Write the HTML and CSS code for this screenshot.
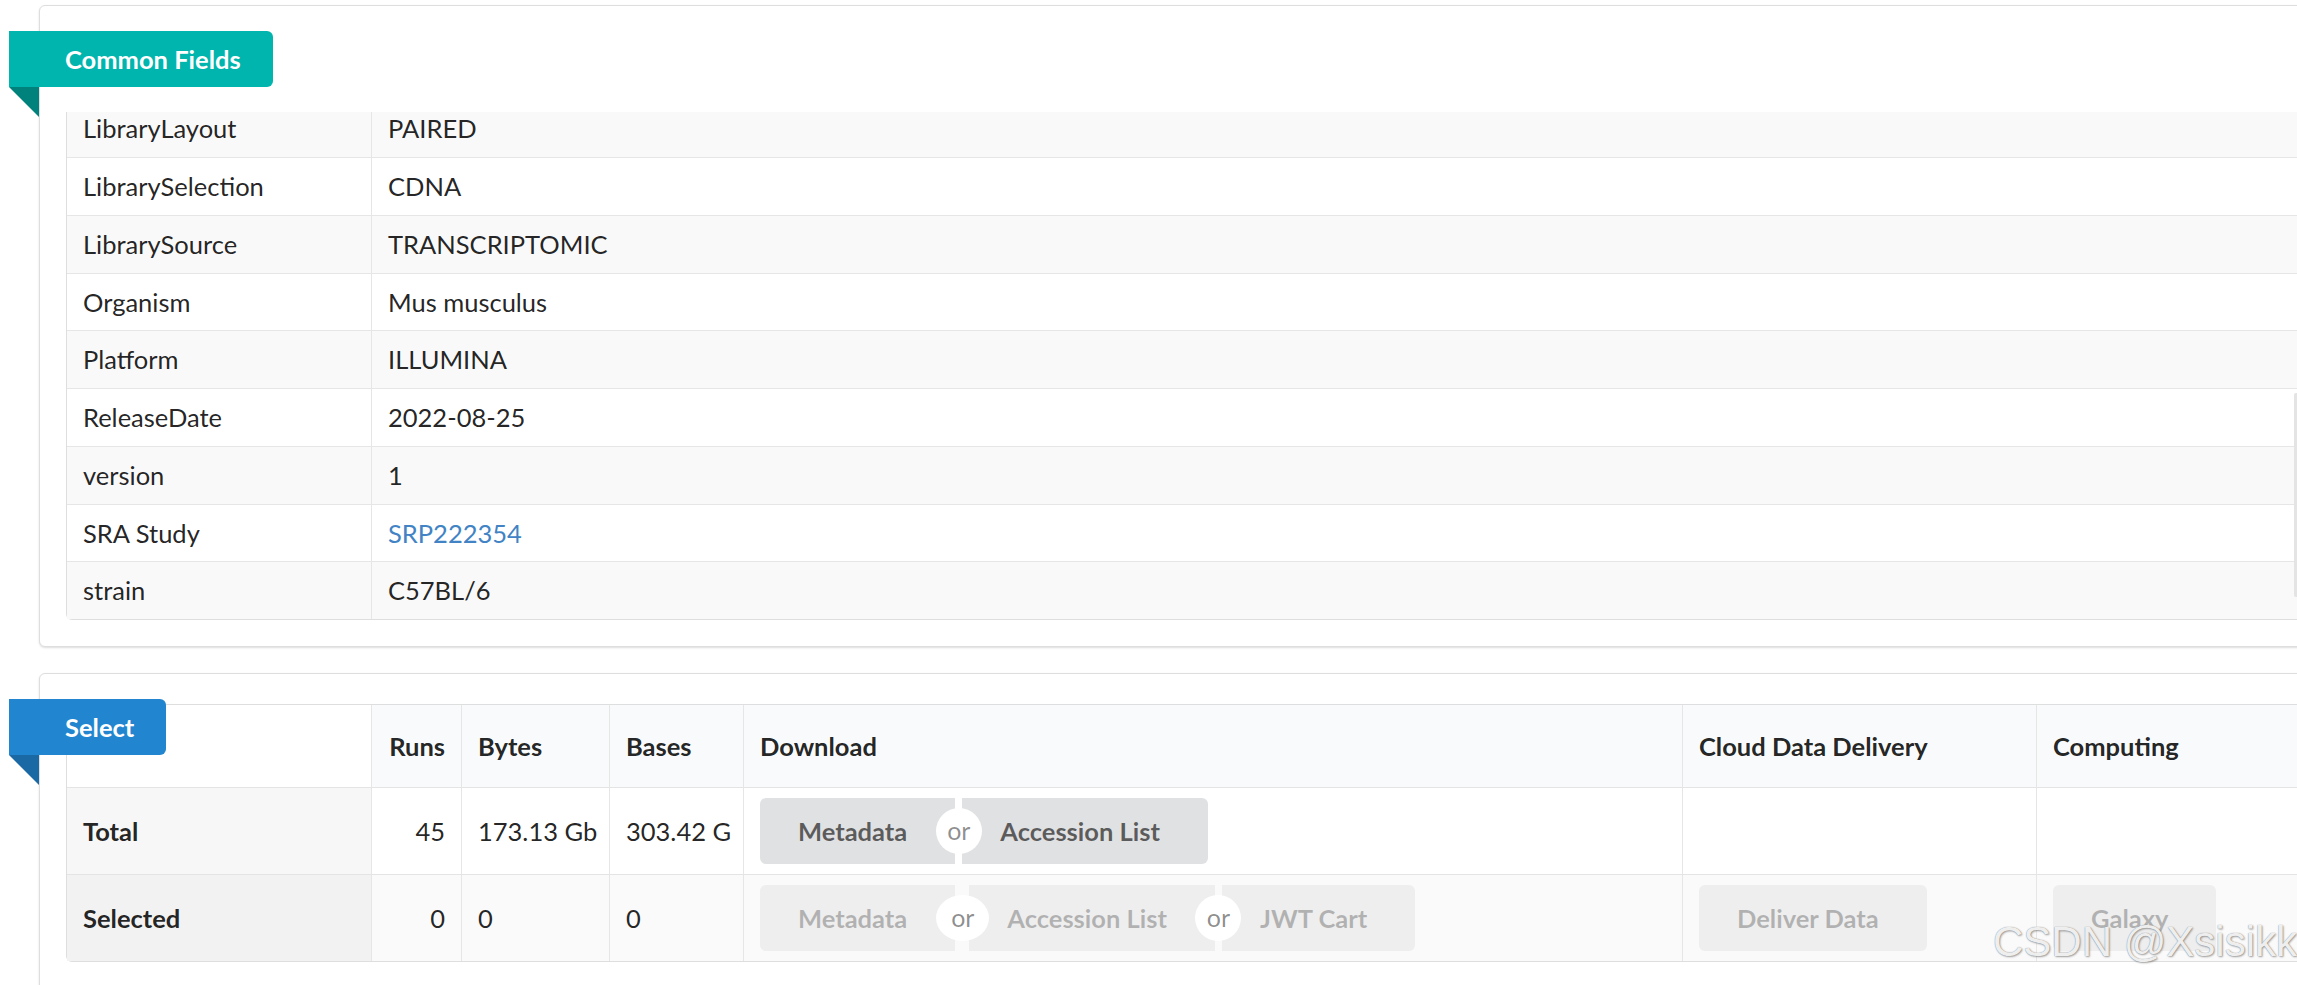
FILE: index.html
```html
<!DOCTYPE html>
<html lang="en">
<head>
  <meta charset="UTF-8" />
  <meta name="viewport" content="width=device-width, initial-scale=1.0" />
  <title>Run Selector</title>
  <link rel="stylesheet" href="styles.css">
</head>
<body>
  <div class="page">
    <div class="segment">
      <div class="ribbon teal">Common Fields</div>
      <div class="scroll-box">
        <table class="fields">
          <tr><td>LibraryLayout</td><td>PAIRED</td></tr>
          <tr><td>LibrarySelection</td><td>CDNA</td></tr>
          <tr><td>LibrarySource</td><td>TRANSCRIPTOMIC</td></tr>
          <tr><td>Organism</td><td>Mus musculus</td></tr>
          <tr><td>Platform</td><td>ILLUMINA</td></tr>
          <tr><td>ReleaseDate</td><td>2022-08-25</td></tr>
          <tr><td>version</td><td>1</td></tr>
          <tr><td>SRA Study</td><td><a href="#">SRP222354</a></td></tr>
          <tr><td>strain</td><td>C57BL/6</td></tr>
        </table>
        <div class="scroll-thumb"></div>
      </div>
    </div>

    <div class="segment select-segment">
      <div class="ribbon blue floating">Select</div>
      <table class="selector">
        <thead>
          <tr>
            <th class="c-label"></th>
            <th class="c-runs num">Runs</th>
            <th class="c-bytes">Bytes</th>
            <th class="c-bases">Bases</th>
            <th class="c-download">Download</th>
            <th class="c-cloud">Cloud Data Delivery</th>
            <th>Computing</th>
          </tr>
        </thead>
        <tbody>
          <tr class="total">
            <td class="label">Total</td>
            <td class="num">45</td>
            <td>173.13 Gb</td>
            <td>303.42 G</td>
            <td>
              <div class="buttons">
                <a class="btn">Metadata</a>
                <div class="or"><span>or</span></div>
                <a class="btn">Accession List</a>
              </div>
            </td>
            <td></td>
            <td></td>
          </tr>
          <tr class="selected">
            <td class="label">Selected</td>
            <td class="num">0</td>
            <td>0</td>
            <td>0</td>
            <td>
              <div class="buttons">
                <a class="btn disabled">Metadata</a>
                <div class="or wide"><span>or</span></div>
                <a class="btn disabled">Accession List</a>
                <div class="or"><span>or</span></div>
                <a class="btn disabled">JWT Cart</a>
              </div>
            </td>
            <td><a class="btn single disabled">Deliver Data</a></td>
            <td><a class="btn single disabled">Galaxy</a></td>
          </tr>
        </tbody>
      </table>
    </div>
  </div>

  <div class="watermark">CSDN @Xsisikk</div>
</body>
</html>
```

FILE: styles.css
```css
body {
  margin: 0;
  font-family: Lato, "Helvetica Neue", Arial, sans-serif;
  color: rgba(0, 0, 0, 0.87);
  background: #fff;
  overflow: hidden;
}
.page {
  padding: 5px 0 0 39px;
  width: 2400px;
}
.segment {
  position: relative;
  box-sizing: border-box;
  width: 2291px;
  padding: 25px 26px 26px 26px;
  background: #fff;
  border: 1px solid #dededf;
  border-radius: 6px;
  box-shadow: 0 1px 2px 0 rgba(34, 36, 38, 0.15);
}
.select-segment {
  margin-top: 26px;
  padding-top: 30px;
  height: 330px;
}

/* ribbon labels */
.ribbon {
  position: relative;
  width: max-content;
  margin-left: -57px;
  padding: 15px 32px 15px 56px;
  font-size: 25.5px;
  line-height: 26px;
  font-weight: 700;
  color: #fff;
  border-radius: 0 6px 6px 0;
  z-index: 2;
}
.ribbon:after {
  content: "";
  position: absolute;
  top: 100%;
  left: 0;
  border-style: solid;
  border-width: 0 30px 30px 0;
  border-color: transparent;
}
.ribbon.teal {
  background: #00b5ad;
}
.ribbon.teal:after {
  border-right-color: #00827c;
}
.ribbon.blue {
  background: #2185d0;
}
.ribbon.blue:after {
  border-right-color: #1a69a4;
}
.ribbon.floating {
  position: absolute;
  top: 25px;
  left: -31px;
  margin: 0;
}

/* common fields */
.scroll-box {
  position: relative;
  margin-top: 25px;
  height: 508px;
  overflow: hidden;
  display: flex;
  flex-direction: column;
  justify-content: flex-end;
}
.scroll-thumb {
  position: absolute;
  right: 1px;
  top: 281px;
  width: 8px;
  height: 204px;
  background: #e4e4e4;
  border-radius: 2px;
}
table {
  border-collapse: separate;
  border-spacing: 0;
  width: 100%;
  table-layout: fixed;
  font-size: 25.5px;
  border: 1px solid #dededf;
  border-radius: 6px;
  flex-shrink: 0;
}
td, th {
  box-sizing: border-box;
  text-align: left;
  vertical-align: middle;
  white-space: nowrap;
}
.fields td {
  padding: 10px 16px;
  line-height: 36.75px;
  border-top: 1px solid #e6e6e6;
}
.fields tr:first-child td {
  border-top: none;
}
.fields td:first-child {
  width: 304px;
}
.fields td + td {
  border-left: 1px solid #e6e6e6;
}
.fields tr:nth-child(odd) td {
  background: #f9f9f9;
}
.fields a {
  color: #4183c4;
  text-decoration: none;
}

/* select table */
.selector th {
  padding: 22px 16px;
  line-height: 38px;
  font-weight: 700;
  background: #f9fafb;
  border-bottom: 1px solid #e4e4e4;
}
.selector th:first-child {
  background: #fff;
}
.selector th + th,
.selector td + td {
  border-left: 1px solid #e6e6e6;
}
.c-label { width: 304px; }
.c-runs { width: 90px; }
.c-bytes { width: 148px; }
.c-bases { width: 134px; }
.c-download { width: 939px; }
.c-cloud { width: 354px; }
.selector .num {
  text-align: right;
}
.selector td {
  padding: 10px 16px;
  line-height: 66px;
}
.selector .label {
  font-weight: 700;
}
.total td {
  background: #fff;
}
.total .label {
  background: #f7f7f7;
}
.selected td {
  background: #fafafa;
  border-top: 1px solid #e4e4e4;
}
.selected .label {
  background: #f2f2f2;
}

/* buttons */
.buttons {
  display: flex;
}
.btn {
  display: block;
  padding: 20px 48px 20px 38px;
  font-size: 25.5px;
  line-height: 26px;
  font-weight: 700;
  color: rgba(0, 0, 0, 0.6);
  background: #e0e1e2;
  border-radius: 0;
  cursor: pointer;
}
.buttons .btn:first-child {
  border-radius: 6px 0 0 6px;
}
.buttons .btn:last-child {
  border-radius: 0 6px 6px 0;
}
.btn.single {
  width: max-content;
  border-radius: 6px;
}
.btn.disabled {
  opacity: 0.45;
  cursor: default;
}
.or {
  position: relative;
  width: 7px;
  z-index: 1;
}
.or.wide {
  width: 14px;
}
.or span {
  position: absolute;
  top: 50%;
  left: 50%;
  width: 46px;
  height: 46px;
  margin: -23px 0 0 -23px;
  border-radius: 50%;
  background: #fff;
  color: rgba(0, 0, 0, 0.45);
  font-size: 25px;
  line-height: 44px;
  text-align: center;
}
.or.wide span {
  width: 53px;
  margin-left: -26px;
}

.watermark {
  position: absolute;
  left: 1993px;
  top: 918px;
  font-family: "Liberation Sans", Arial, sans-serif;
  font-size: 42px;
  color: rgba(255, 255, 255, 0.9);
  text-shadow: 0 0 1px #777, 1px 1px 2px rgba(0, 0, 0, 0.35);
  white-space: nowrap;
}
```
